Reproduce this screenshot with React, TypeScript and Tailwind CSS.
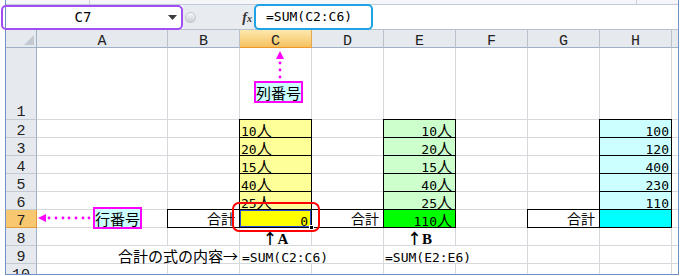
import type { ReactNode } from "react";

const COLS = "grid grid-cols-[31px_131px_72px_72px_72px_72px_72px_72px_72px_6px]";
const MONO = "font-['DejaVu_Sans_Mono','Noto_Sans_CJK_JP',monospace]";
const JP = "font-['Noto_Sans_CJK_JP',sans-serif]";
const HEAD = "font-['Liberation_Mono','DejaVu_Sans_Mono',monospace]";
const GRID = "border-[#d5d9de]";
const BOX = "border-black shadow-[0_-1px_0_#000,-1px_0_0_#000,-1px_-1px_0_#000]";

function Row({ tall, children }: { tall?: boolean; children: ReactNode }) {
  return (
    <div className={`${COLS} ${tall ? "h-[72px] grid-rows-[72px]" : "h-[18px] grid-rows-[18px]"}`}>
      {children}
    </div>
  );
}

function RowHead({ n, active, tall }: { n: number; active?: boolean; tall?: boolean }) {
  return (
    <div
      className={`flex justify-center border-r border-b ${HEAD} text-[15px] text-[#222] ${
        tall ? "items-end" : "items-start pt-[3px]"
      } ${
        active
          ? "bg-[#f7c86f] border-r-[#e29a3c] border-b-[#e29a3c]"
          : "bg-[#e6e9ee] border-r-[#9fb1c6] border-b-[#c3cad3]"
      }`}
    >
      <span className={tall ? "leading-[12px]" : "leading-[17px]"}>{n}</span>
    </div>
  );
}

type CellProps = {
  bg?: string;
  box?: boolean;
  align?: "start" | "end" | "center";
  span?: boolean;
  className?: string;
  children?: ReactNode;
};

function Cell({ bg = "bg-white", box, align = "start", span, className = "", children }: CellProps) {
  const j = align === "end" ? "justify-end" : align === "center" ? "justify-center" : "justify-start";
  return (
    <div
      className={`flex items-start whitespace-nowrap border-r border-b text-black ${bg} ${box ? BOX : GRID} ${j} ${
        span ? "col-span-2" : ""
      } ${className}`}
    >
      {children}
    </div>
  );
}

function Filler() {
  return <div className={`border-b bg-white ${GRID}`} />;
}

function Ppl({ n }: { n: string }) {
  return (
    <span className="flex items-baseline pt-[1px] leading-[17px]">
      <span className={`${MONO} text-[13px]`}>{n}</span>
      <span className={`${JP} text-[15px]`}>人</span>
    </span>
  );
}

function Num({ children }: { children: ReactNode }) {
  return <span className={`${MONO} pt-[3px] text-[13px] leading-[17px]`}>{children}</span>;
}

function Sum() {
  return <span className={`${JP} text-[14px] leading-[17px]`}>合計</span>;
}

function Up({ l }: { l: string }) {
  return (
    <span className="flex items-baseline pt-[1px] font-bold leading-[17px]">
      <span className={`${JP} text-[15px]`}>↑</span>
      <span className="font-['Liberation_Serif',serif] text-[15px]">{l}</span>
    </span>
  );
}

const data: [string, string][] = [
  ["10", "100"],
  ["20", "120"],
  ["15", "400"],
  ["40", "230"],
  ["25", "110"],
];

export default function App() {
  return (
    <div className="relative h-[276px] w-[682px] overflow-hidden bg-white">
      <div className="ml-[5px] h-[275px] w-[674px] overflow-hidden border-x border-b border-[#7093c6]">
        {/* ribbon edge */}
        <div className="flex h-[5px] border-b border-[#c1cad6] bg-[#f4f6f9]">
          <div className="w-[84px] border-r border-[#c9d1dc]" />
          <div className="w-[547px] border-r border-[#c9d1dc]" />
        </div>

        {/* formula bar */}
        <div className="flex h-[25px] border-b border-[#b6c1cf]">
          <div className="flex w-[177px] items-center bg-white">
            <span className={`w-[154px] text-center text-[14px] leading-[24px] ${MONO}`}>C7</span>
            <svg width="9" height="5" viewBox="0 0 9 5" className="ml-[8px]">
              <path d="M0 0H9L4.5 5Z" fill="#3c3c3c" />
            </svg>
          </div>
          <div className="flex w-[72px] items-center bg-[#e8ecf1] pl-[2px]">
            <div className="h-[11px] w-[11px] rounded-full border border-[#bfc6cf] bg-linear-to-b from-[#f7f8fa] to-[#c9cfd7]" />
            <span className="mr-[3px] ml-auto font-['Liberation_Serif',serif] text-[14px] font-bold italic text-[#333]">
              f<span className="text-[10px]">x</span>
            </span>
          </div>
          <div className="flex flex-1 items-center bg-white pl-[11px]">
            <span className={`${MONO} text-[13px]`}>=SUM(C2:C6)</span>
          </div>
        </div>

        {/* column headers */}
        <div className={`${COLS} h-[18px] grid-rows-[18px]`}>
          <div className="flex items-end justify-end border-r border-b border-[#9fb1c6] bg-[#e6e9ee] p-[2px]">
            <svg width="10" height="10" viewBox="0 0 10 10">
              <path d="M10 0V10H0Z" fill="#c3c9d1" />
            </svg>
          </div>
          {["A", "B", "C", "D", "E", "F", "G", "H"].map((l) => (
            <div
              key={l}
              className={`flex justify-center border-r border-b pt-[3px] ${HEAD} text-[15px] leading-[17px] text-[#222] ${
                l === "C"
                  ? "bg-linear-to-b from-[#fde8ad] to-[#f5c25e] border-r-[#e7a84c] border-b-[#f0962e]"
                  : "bg-[#e6e9ee] border-r-[#b8c1cc] border-b-[#9fb1c6]"
              }`}
            >
              {l}
            </div>
          ))}
          <div className="border-b border-b-[#9fb1c6] bg-[#e6e9ee]" />
        </div>

        {/* row 1 */}
        <Row tall>
          <RowHead n={1} tall />
          <Cell />
          <Cell />
          <Cell />
          <Cell />
          <Cell />
          <Cell />
          <Cell />
          <Cell />
          <Filler />
        </Row>

        {/* rows 2-6 */}
        {data.map(([p, h], i) => (
          <Row key={p + h}>
            <RowHead n={i + 2} />
            <Cell />
            <Cell />
            <Cell bg="bg-[#ffff99]" box className="pl-[1px]">
              <Ppl n={p} />
            </Cell>
            <Cell />
            <Cell bg="bg-[#ccffcc]" box align="end" className="pr-[3px]">
              <Ppl n={p} />
            </Cell>
            <Cell />
            <Cell />
            <Cell bg="bg-[#ccffff]" box align="end" className="pr-[2px]">
              <Num>{h}</Num>
            </Cell>
            <Filler />
          </Row>
        ))}

        {/* row 7 */}
        <Row>
          <RowHead n={7} active />
          <Cell />
          <Cell box align="end" className="pr-[4px]">
            <Sum />
          </Cell>
          <Cell bg="bg-[#ffff00] relative" box align="end" className="pr-[3px]">
            <div className="pointer-events-none absolute inset-0 border border-[#2f4fd8]" />
            <Num>0</Num>
            <div className="absolute -right-[3px] -bottom-[3px] h-[5px] w-[5px] border border-white bg-black" />
          </Cell>
          <Cell box align="end" className="pr-[4px]">
            <Sum />
          </Cell>
          <Cell bg="bg-[#00ff00]" box align="end" className="pr-[3px]">
            <Ppl n="110" />
          </Cell>
          <Cell />
          <Cell box align="end" className="pr-[4px]">
            <Sum />
          </Cell>
          <Cell bg="bg-[#00ffff]" box />
          <Filler />
        </Row>

        {/* row 8 */}
        <Row>
          <RowHead n={8} />
          <Cell />
          <Cell />
          <Cell align="center">
            <Up l="A" />
          </Cell>
          <Cell />
          <Cell align="center">
            <Up l="B" />
          </Cell>
          <Cell />
          <Cell />
          <Cell />
          <Filler />
        </Row>

        {/* row 9 */}
        <Row>
          <RowHead n={9} />
          <Cell span align="end" className="pr-[1px]">
            <span className={`${JP} pt-[1px] text-[15px] leading-[17px]`}>合計の式の内容→</span>
          </Cell>
          <Cell span className="pl-[2px]">
            <Num>=SUM(C2:C6)</Num>
          </Cell>
          <Cell span className="pl-[1px]">
            <Num>=SUM(E2:E6)</Num>
          </Cell>
          <Cell />
          <Cell />
          <Filler />
        </Row>

        {/* row 10 */}
        <Row>
          <RowHead n={10} />
          <Cell />
          <Cell />
          <Cell />
          <Cell />
          <Cell />
          <Cell />
          <Cell />
          <Cell />
          <Filler />
        </Row>
      </div>

      {/* callout outlines */}
      <div className="pointer-events-none absolute top-[5px] left-[1px] h-[25px] w-[182px] rounded-[5px] border-2 border-[#9f4ff2]" />
      <div className="pointer-events-none absolute top-[4px] left-[254px] h-[26px] w-[119px] rounded-[5px] border-2 border-[#1ea3e6]" />
      <div className="pointer-events-none absolute top-[202px] left-[232px] h-[30px] w-[88px] rounded-[7px] border-2 border-[#ff0000]" />

      {/* dotted arrows */}
      <svg className="pointer-events-none absolute inset-0" width="682" height="276" viewBox="0 0 682 276">
        <path d="M280 51L276 59H284Z" fill="#ff00ff" />
        {[63, 70, 77].map((y) => (
          <circle key={y} cx="280" cy={y} r="1.4" fill="#ff00ff" />
        ))}
        <path d="M38 218L46 214V222Z" fill="#ff00ff" />
        {[49, 56, 63, 69, 76, 83, 89].map((x) => (
          <circle key={x} cx={x} cy="218" r="1.4" fill="#ff00ff" />
        ))}
      </svg>

      {/* labels */}
      <div
        className={`absolute top-[81px] left-[254px] flex h-[22px] w-[49px] items-center justify-center border-2 border-[#ff00ff] bg-[#ccffff] ${JP} text-[15px] leading-none text-black`}
      >
        列番号
      </div>
      <div
        className={`absolute top-[207px] left-[93px] flex h-[22px] w-[49px] items-center justify-center border-2 border-[#ff00ff] bg-[#ccffff] ${JP} text-[15px] leading-none text-black`}
      >
        行番号
      </div>
    </div>
  );
}
